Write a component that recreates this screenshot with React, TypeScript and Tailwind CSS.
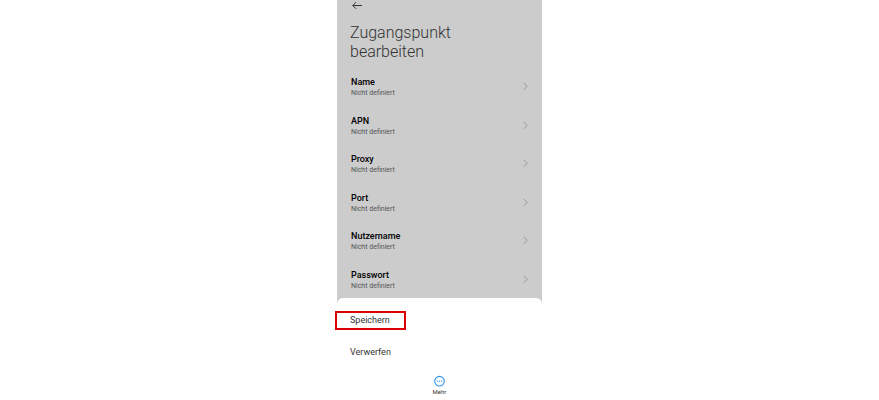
const fields = [
  { label: "Name", value: "Nicht definiert" },
  { label: "APN", value: "Nicht definiert" },
  { label: "Proxy", value: "Nicht definiert" },
  { label: "Port", value: "Nicht definiert" },
  { label: "Nutzername", value: "Nicht definiert" },
  { label: "Passwort", value: "Nicht definiert" },
];

function ArrowLeft() {
  return (
    <svg viewBox="0 0 10 8" className="w-[10px] h-2" fill="none" stroke="#333" strokeWidth="1">
      <path d="M10 4.5H0.8M4.1 1.2L0.8 4.5l3.3 3.3" />
    </svg>
  );
}

function Chevron() {
  return (
    <svg viewBox="0 0 5 8" className="w-[5px] h-2" fill="none" stroke="#8c8c8c" strokeWidth="0.8">
      <path d="M0.8 0.9L4.2 4.3L0.8 7.7" />
    </svg>
  );
}

function MoreIcon() {
  return (
    <svg viewBox="0 0 12 12" className="size-3" fill="none">
      <circle cx="6.5" cy="6.2" r="4.8" stroke="#2f94f5" strokeWidth="1.1" />
      <circle cx="4.4" cy="6.2" r="0.65" fill="#2f94f5" />
      <circle cx="6.5" cy="6.2" r="0.65" fill="#2f94f5" />
      <circle cx="8.6" cy="6.2" r="0.65" fill="#2f94f5" />
    </svg>
  );
}

function FieldRow({ label, value }: { label: string; value: string }) {
  return (
    <li className="flex">
      <button
        type="button"
        className="flex flex-1 items-center justify-between px-[14px] text-left"
      >
        <span className="flex flex-col pt-[2px]">
          <span className="text-[9px] leading-[12px] font-medium text-black">{label}</span>
          <span className="text-[7px] leading-[10px] text-[#555]">{value}</span>
        </span>
        <Chevron />
      </button>
    </li>
  );
}

export default function App() {
  return (
    <div className="min-h-screen bg-white font-['Roboto',sans-serif]">
      <main className="mx-auto w-[205px]">
        <div className="bg-[#cccccc]">
          <header className="px-[13px] pt-px">
            <button type="button" aria-label="Zurück" className="block px-[2px]">
              <ArrowLeft />
            </button>
            <h1 className="mt-[14px] w-[120px] text-[16px] leading-[19px] font-light text-[#333]">
              Zugangspunkt bearbeiten
            </h1>
          </header>

          <ul className="mt-[6px] grid h-[231px] grid-rows-6">
            {fields.map((field) => (
              <FieldRow key={field.label} label={field.label} value={field.value} />
            ))}
          </ul>

          {/* Bottom sheet */}
          <section className="rounded-t-md bg-white pt-[13px]">
            {/* Save action, highlighted */}
            <button
              type="button"
              className="-ml-[2px] block h-[19px] w-[71px] border-2 border-[#dc0000] pl-[13px] text-left text-[9px] leading-[15px] text-[#333]"
            >
              Speichern
            </button>
            <button
              type="button"
              className="mt-[14px] block h-[17px] px-[13px] text-left text-[9px] leading-[17px] text-[#333]"
            >
              Verwerfen
            </button>
            <button
              type="button"
              className="mx-auto mt-[14px] flex flex-col items-center pb-[3px] text-[6px] leading-[10px] text-[#333]"
            >
              <MoreIcon />
              Mehr
            </button>
          </section>
        </div>
      </main>
    </div>
  );
}
